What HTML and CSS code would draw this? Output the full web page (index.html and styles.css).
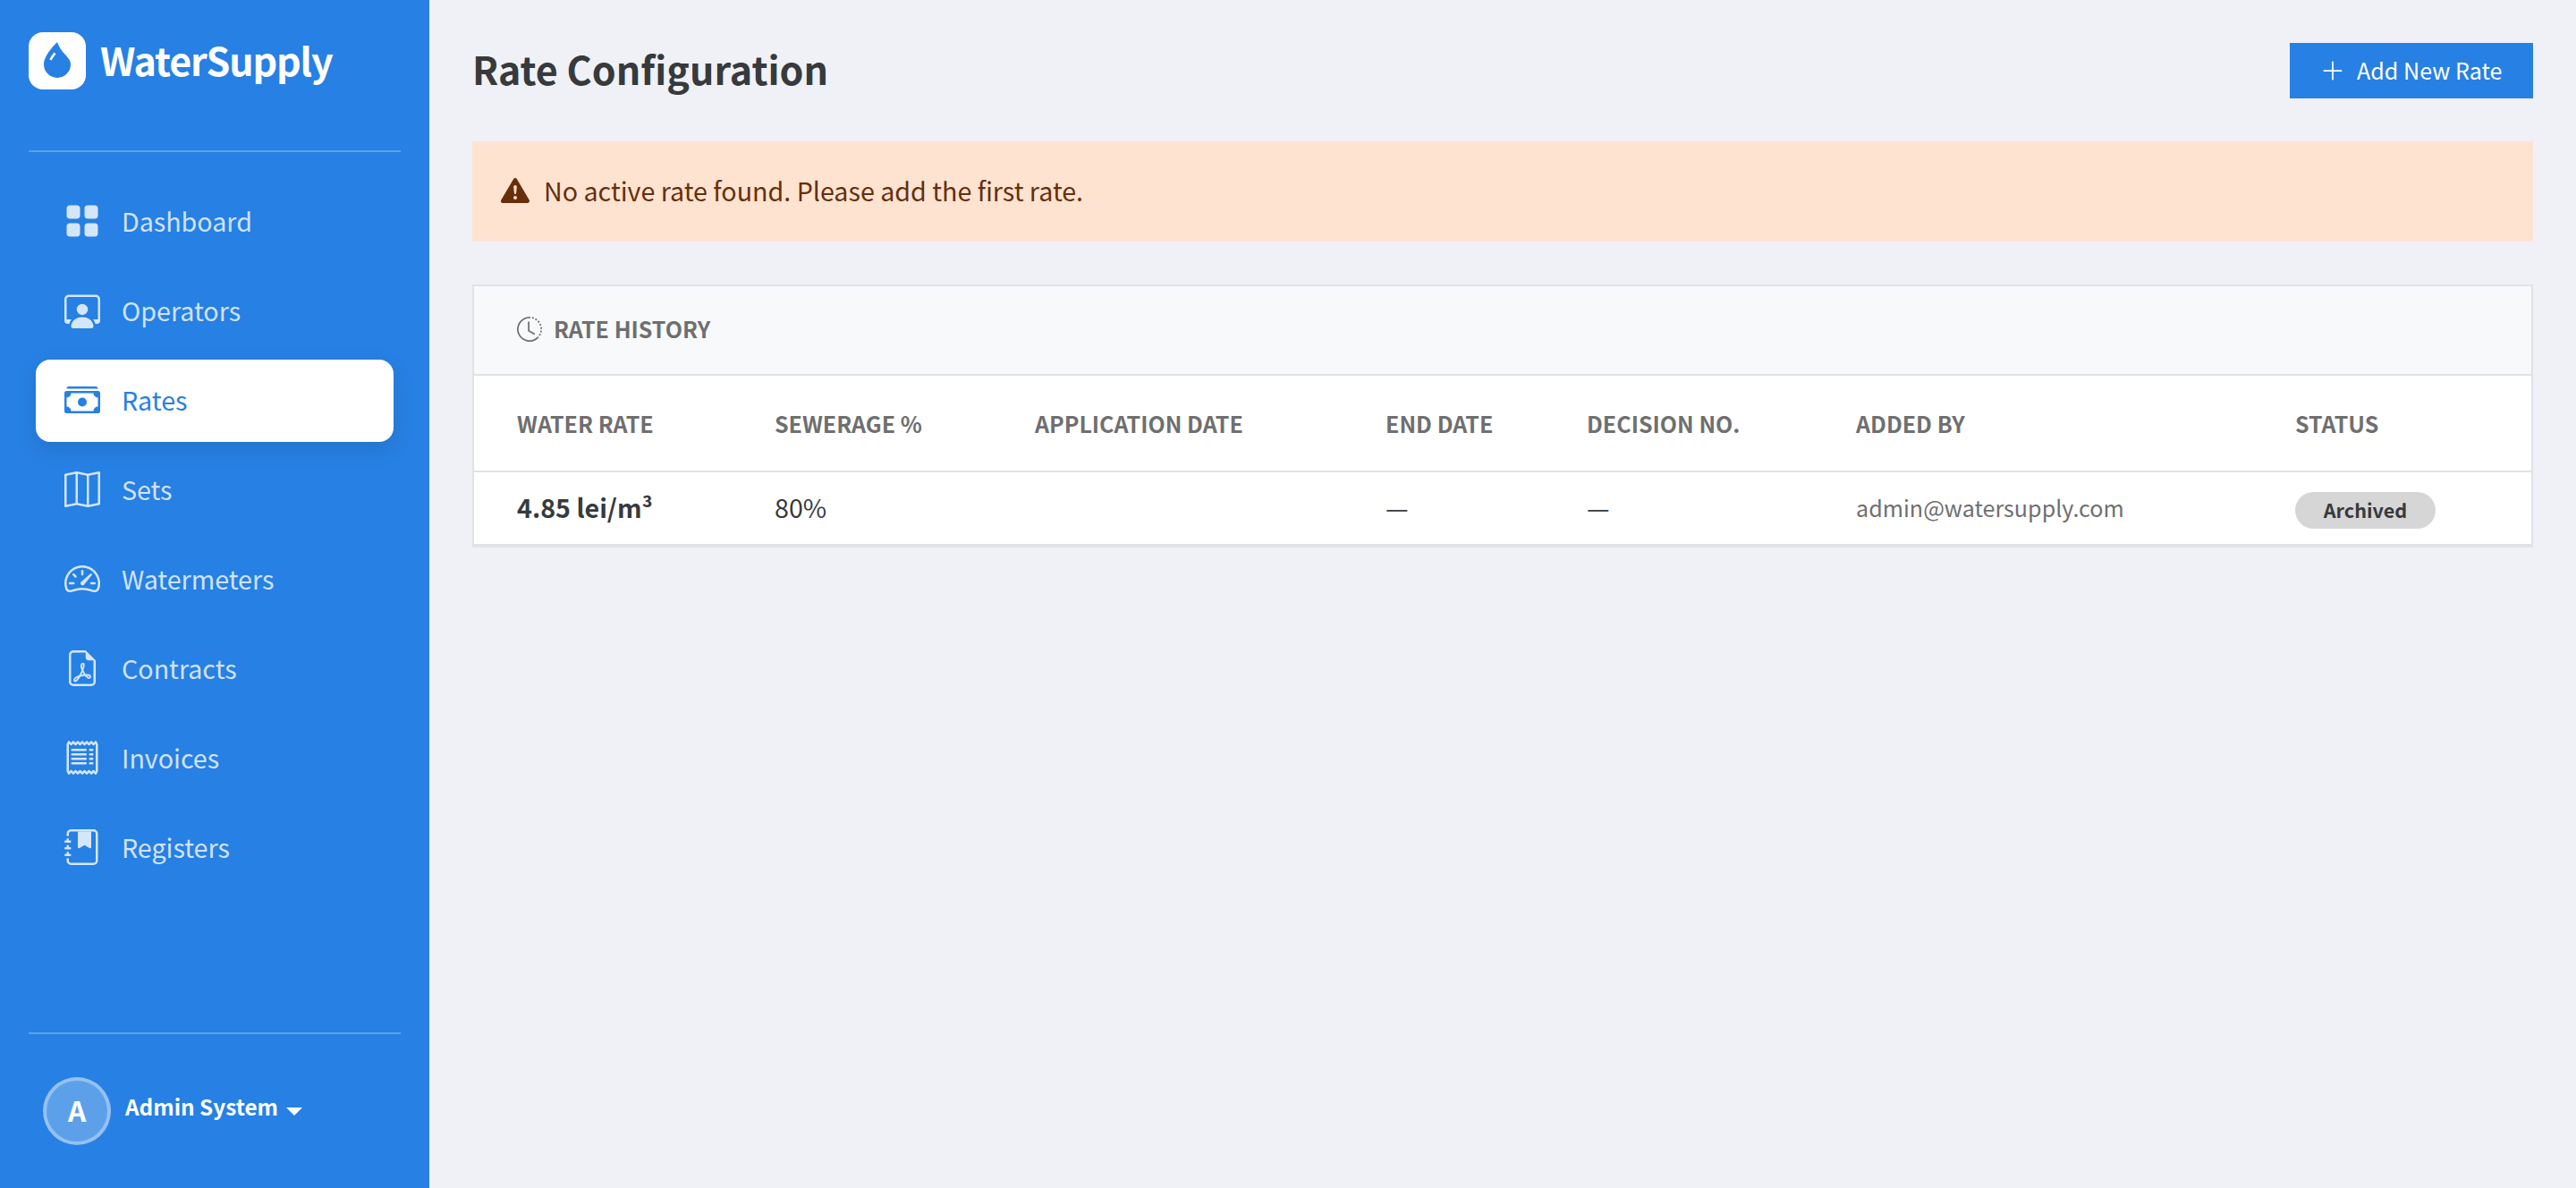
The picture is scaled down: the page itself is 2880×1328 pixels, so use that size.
FILE: index.html
```html
<!DOCTYPE html>
<html lang="en">
<head>
<meta charset="utf-8">
<title>WaterSupply – Rate Configuration</title>
<link rel="stylesheet" href="styles.css">
</head>
<body>
<div class="app">
  <aside class="sidebar">
    <a class="brand">
      <span class="brand-mark"><svg class="icon" viewBox="0 0 16 16"><path fill-rule="evenodd" d="M8 16a6 6 0 0 0 6-6c0-1.655-1.122-2.904-2.432-4.362C10.254 4.176 8.75 2.503 8 0c0 0-6 5.686-6 10a6 6 0 0 0 6 6ZM6.646 4.646l.708.708c-.29.29-1.128 1.311-1.907 2.87l-.894-.448c.82-1.641 1.717-2.753 2.093-3.13Z"/></svg></span>
      <span class="brand-name">WaterSupply</span>
    </a>
    <nav class="nav">
      <a class="nav-item"><svg class="icon" viewBox="0 0 16 16"><path d="M1 2.5A1.5 1.5 0 0 1 2.5 1h3A1.5 1.5 0 0 1 7 2.5v3A1.5 1.5 0 0 1 5.5 7h-3A1.5 1.5 0 0 1 1 5.5v-3zm8 0A1.5 1.5 0 0 1 10.5 1h3A1.5 1.5 0 0 1 15 2.5v3A1.5 1.5 0 0 1 13.5 7h-3A1.5 1.5 0 0 1 9 5.5v-3zm-8 8A1.5 1.5 0 0 1 2.5 9h3A1.5 1.5 0 0 1 7 10.5v3A1.5 1.5 0 0 1 5.5 15h-3A1.5 1.5 0 0 1 1 13.5v-3zm8 0A1.5 1.5 0 0 1 10.5 9h3a1.5 1.5 0 0 1 1.5 1.5v3a1.5 1.5 0 0 1-1.5 1.5h-3A1.5 1.5 0 0 1 9 13.5v-3z"/></svg><span>Dashboard</span></a>
      <a class="nav-item"><svg class="icon" viewBox="0 0 16 16"><path d="M4 16s-1 0-1-1 1-4 5-4 5 3 5 4-1 1-1 1H4Zm4-5.95a2.5 2.5 0 1 0 0-5 2.5 2.5 0 0 0 0 5Z"/><path d="M2 1a2 2 0 0 0-2 2v9.5A1.5 1.5 0 0 0 1.5 14h.653a5.373 5.373 0 0 1 1.066-2H1V3a1 1 0 0 1 1-1h12a1 1 0 0 1 1 1v9h-2.219c.554.654.89 1.373 1.066 2h.653a1.5 1.5 0 0 0 1.5-1.5V3a2 2 0 0 0-2-2H2Z"/></svg><span>Operators</span></a>
      <a class="nav-item active"><svg class="icon" viewBox="0 0 16 16"><path d="M1 3a1 1 0 0 1 1-1h12a1 1 0 0 1 1 1H1zm7 8a2 2 0 1 0 0-4 2 2 0 0 0 0 4z"/><path d="M0 5a1 1 0 0 1 1-1h14a1 1 0 0 1 1 1v8a1 1 0 0 1-1 1H1a1 1 0 0 1-1-1V5zm3 0a2 2 0 0 1-2 2v4a2 2 0 0 1 2 2h10a2 2 0 0 1 2-2V7a2 2 0 0 1-2-2H3z"/></svg><span>Rates</span></a>
      <a class="nav-item"><svg class="icon" viewBox="0 0 16 16"><path fill-rule="evenodd" d="M15.817.113A.5.5 0 0 1 16 .5v14a.5.5 0 0 1-.402.49l-5 1a.502.502 0 0 1-.196 0L5.5 15.01l-4.902.98A.5.5 0 0 1 0 15.5v-14a.5.5 0 0 1 .402-.49l5-1a.5.5 0 0 1 .196 0L10.5.99l4.902-.98a.5.5 0 0 1 .415.103zM10 1.91l-4-.8v12.98l4 .8V1.91zm1 12.98 4-.8V1.11l-4 .8v12.98zm-6-.8V1.11l-4 .8v12.98l4-.8z"/></svg><span>Sets</span></a>
      <a class="nav-item"><svg class="icon" viewBox="0 0 16 16"><path d="M8 4a.5.5 0 0 1 .5.5V6a.5.5 0 0 1-1 0V4.5A.5.5 0 0 1 8 4zM3.732 5.732a.5.5 0 0 1 .707 0l.915.914a.5.5 0 1 1-.708.708l-.914-.915a.5.5 0 0 1 0-.707zM2 10a.5.5 0 0 1 .5-.5h1.586a.5.5 0 0 1 0 1H2.5A.5.5 0 0 1 2 10zm9.5 0a.5.5 0 0 1 .5-.5h1.5a.5.5 0 0 1 0 1H12a.5.5 0 0 1-.5-.5zm.754-4.246a.389.389 0 0 0-.527-.02L7.547 9.31a.91.91 0 1 0 1.302 1.258l3.434-4.297a.389.389 0 0 0-.029-.518z"/><path fill-rule="evenodd" d="M0 10a8 8 0 1 1 15.547 2.661c-.442 1.253-1.845 1.602-2.932 1.25C11.309 13.488 9.475 13 8 13c-1.474 0-3.31.488-4.615.911-1.087.352-2.49.003-2.932-1.25A7.988 7.988 0 0 1 0 10zm8-7a7 7 0 0 0-6.603 9.329c.203.575.923.876 1.68.63C4.397 12.533 6.358 12 8 12s3.604.532 4.923.96c.757.245 1.477-.056 1.68-.631A7 7 0 0 0 8 3z"/></svg><span>Watermeters</span></a>
      <a class="nav-item"><svg class="icon" viewBox="0 0 16 16"><path d="M14 14V4.5L9.5 0H4a2 2 0 0 0-2 2v12a2 2 0 0 0 2 2h8a2 2 0 0 0 2-2zM9.5 3A1.5 1.5 0 0 0 11 4.5h2V14a1 1 0 0 1-1 1H4a1 1 0 0 1-1-1V2a1 1 0 0 1 1-1h5.5v2z"/><path d="M4.603 14.087a.81.81 0 0 1-.438-.42c-.195-.388-.13-.776.08-1.102.198-.307.526-.568.897-.787a7.68 7.68 0 0 1 1.482-.645 19.697 19.697 0 0 0 1.062-2.227 7.269 7.269 0 0 1-.43-1.295c-.086-.4-.119-.796-.046-1.136.075-.354.274-.672.65-.823.192-.077.4-.12.602-.077a.7.7 0 0 1 .477.365c.088.164.12.356.127.538.007.188-.012.396-.047.614-.084.51-.27 1.134-.52 1.794a10.954 10.954 0 0 0 .98 1.686 5.753 5.753 0 0 1 1.334.05c.364.066.734.195.96.465.12.144.193.32.2.518.007.192-.047.382-.138.563a1.04 1.04 0 0 1-.354.416.856.856 0 0 1-.51.138c-.331-.014-.654-.196-.933-.417a5.712 5.712 0 0 1-.911-.95 11.651 11.651 0 0 0-1.997.406 11.307 11.307 0 0 1-1.02 1.51c-.292.35-.609.656-.927.787a.793.793 0 0 1-.58.029zm1.379-1.901c-.166.076-.32.156-.459.238-.328.194-.541.383-.647.547-.094.145-.096.25-.04.361.01.022.02.036.026.044a.266.266 0 0 0 .035-.012c.137-.056.355-.235.635-.572a8.18 8.18 0 0 0 .45-.606zm1.64-1.33a12.71 12.71 0 0 1 1.01-.193 11.744 11.744 0 0 1-.51-.858 20.801 20.801 0 0 1-.5 1.05zm2.446.45c.15.163.296.3.435.41.24.19.407.253.498.256a.107.107 0 0 0 .07-.015.307.307 0 0 0 .094-.125.436.436 0 0 0 .059-.2.095.095 0 0 0-.026-.063c-.052-.062-.2-.152-.518-.209a3.876 3.876 0 0 0-.612-.053zM8.078 7.8a6.7 6.7 0 0 0 .2-.828c.031-.188.043-.343.038-.465a.613.613 0 0 0-.032-.198.517.517 0 0 0-.145.04c-.087.035-.158.106-.196.283-.04.192-.03.469.046.822.024.111.054.227.09.346z"/></svg><span>Contracts</span></a>
      <a class="nav-item"><svg class="icon" viewBox="0 0 16 16"><path d="M1.92.506a.5.5 0 0 1 .434.14L3 1.293l.646-.647a.5.5 0 0 1 .708 0L5 1.293l.646-.647a.5.5 0 0 1 .708 0L7 1.293l.646-.647a.5.5 0 0 1 .708 0L9 1.293l.646-.647a.5.5 0 0 1 .708 0l.646.647.646-.647a.5.5 0 0 1 .708 0l.646.647.646-.647a.5.5 0 0 1 .801.13l.5 1A.5.5 0 0 1 15 2v12a.5.5 0 0 1-.053.224l-.5 1a.5.5 0 0 1-.8.13L13 14.707l-.646.647a.5.5 0 0 1-.708 0L11 14.707l-.646.647a.5.5 0 0 1-.708 0L9 14.707l-.646.647a.5.5 0 0 1-.708 0L7 14.707l-.646.647a.5.5 0 0 1-.708 0L5 14.707l-.646.647a.5.5 0 0 1-.708 0L3 14.707l-.646.647a.5.5 0 0 1-.801-.13l-.5-1A.5.5 0 0 1 1 14V2a.5.5 0 0 1 .053-.224l.5-1a.5.5 0 0 1 .367-.27zm.217 1.338L2 2.118v11.764l.137.274.51-.51a.5.5 0 0 1 .707 0l.646.647.646-.646a.5.5 0 0 1 .708 0l.646.646.646-.646a.5.5 0 0 1 .708 0l.646.646.646-.646a.5.5 0 0 1 .708 0l.646.646.646-.646a.5.5 0 0 1 .708 0l.646.646.646-.646a.5.5 0 0 1 .708 0l.509.509.137-.274V2.118l-.137-.274-.51.51a.5.5 0 0 1-.707 0L12 1.707l-.646.647a.5.5 0 0 1-.708 0L10 1.707l-.646.647a.5.5 0 0 1-.708 0L8 1.707l-.646.647a.5.5 0 0 1-.708 0L6 1.707l-.646.647a.5.5 0 0 1-.708 0L4 1.707l-.646.647a.5.5 0 0 1-.708 0l-.509-.51z"/><path d="M3 4.5a.5.5 0 0 1 .5-.5h6a.5.5 0 1 1 0 1h-6a.5.5 0 0 1-.5-.5zm0 2a.5.5 0 0 1 .5-.5h6a.5.5 0 1 1 0 1h-6a.5.5 0 0 1-.5-.5zm0 2a.5.5 0 0 1 .5-.5h6a.5.5 0 1 1 0 1h-6a.5.5 0 0 1-.5-.5zm0 2a.5.5 0 0 1 .5-.5h6a.5.5 0 0 1 0 1h-6a.5.5 0 0 1-.5-.5zm8-6a.5.5 0 0 1 .5-.5h1a.5.5 0 0 1 0 1h-1a.5.5 0 0 1-.5-.5zm0 2a.5.5 0 0 1 .5-.5h1a.5.5 0 0 1 0 1h-1a.5.5 0 0 1-.5-.5zm0 2a.5.5 0 0 1 .5-.5h1a.5.5 0 0 1 0 1h-1a.5.5 0 0 1-.5-.5zm0 2a.5.5 0 0 1 .5-.5h1a.5.5 0 0 1 0 1h-1a.5.5 0 0 1-.5-.5z"/></svg><span>Invoices</span></a>
      <a class="nav-item"><svg class="icon" viewBox="0 0 16 16"><path fill-rule="evenodd" d="M6 1h6v7a.5.5 0 0 1-.757.429L9 7.083 6.757 8.43A.5.5 0 0 1 6 8V1z"/><path d="M3 0h10a2 2 0 0 1 2 2v12a2 2 0 0 1-2 2H3a2 2 0 0 1-2-2v-1h1v1a1 1 0 0 0 1 1h10a1 1 0 0 0 1-1V2a1 1 0 0 0-1-1H3a1 1 0 0 0-1 1v1H1V2a2 2 0 0 1 2-2z"/><path d="M1 5v-.5a.5.5 0 0 1 1 0V5h.5a.5.5 0 0 1 0 1h-2a.5.5 0 0 1 0-1H1zm0 3v-.5a.5.5 0 0 1 1 0V8h.5a.5.5 0 0 1 0 1h-2a.5.5 0 0 1 0-1H1zm0 3v-.5a.5.5 0 0 1 1 0v.5h.5a.5.5 0 0 1 0 1h-2a.5.5 0 0 1 0-1H1z"/></svg><span>Registers</span></a>
    </nav>
    <div class="account">
      <span class="avatar">A</span>
      <span class="account-name">Admin System</span>
      <span class="caret"></span>
    </div>
  </aside>
  <main class="content">
    <header class="page-head">
      <h1>Rate Configuration</h1>
      <button class="btn" type="button"><svg class="icon" viewBox="0 0 16 16"><path fill-rule="evenodd" d="M8 2a.5.5 0 0 1 .5.5v5h5a.5.5 0 0 1 0 1h-5v5a.5.5 0 0 1-1 0v-5h-5a.5.5 0 0 1 0-1h5v-5A.5.5 0 0 1 8 2Z"/></svg><span>Add New Rate</span></button>
    </header>
    <div class="alert"><svg class="icon" viewBox="0 0 16 16"><path d="M8.982 1.566a1.13 1.13 0 0 0-1.96 0L.165 13.233c-.457.778.091 1.767.98 1.767h13.713c.889 0 1.438-.99.98-1.767L8.982 1.566zM8 5c.535 0 .954.462.9.995l-.35 3.507a.552.552 0 0 1-1.1 0L7.1 5.995A.905.905 0 0 1 8 5zm.002 6a1 1 0 1 1 0 2 1 1 0 0 1 0-2z"/></svg><span>No active rate found. Please add the first rate.</span></div>
    <section class="card">
      <div class="card-head"><svg class="icon" viewBox="0 0 16 16"><path d="M8.515 1.019A7 7 0 0 0 8 1V0a8 8 0 0 1 .589.022l-.074.997zm2.004.45a7.003 7.003 0 0 0-.985-.299l.219-.976c.383.086.76.2 1.126.342l-.36.933zm1.37.71a7.01 7.01 0 0 0-.439-.27l.493-.87a8.025 8.025 0 0 1 .979.654l-.615.789a6.996 6.996 0 0 0-.418-.302zm1.834 1.79a6.99 6.99 0 0 0-.653-.796l.724-.69c.27.285.52.59.747.91l-.818.576zm.744 1.352a7.08 7.08 0 0 0-.214-.468l.893-.45a7.976 7.976 0 0 1 .45 1.088l-.95.313a7.023 7.023 0 0 0-.179-.483zm.53 2.507a6.991 6.991 0 0 0-.1-1.025l.985-.17c.067.386.106.778.116 1.17l-1 .025zm-.131 1.538c.033-.17.06-.339.081-.51l.993.123a7.957 7.957 0 0 1-.23 1.155l-.964-.267c.046-.165.086-.332.12-.501zm-.952 2.379c.184-.29.346-.594.486-.908l.914.405c-.16.36-.345.706-.555 1.038l-.845-.535zm-.964 1.205c.122-.122.239-.248.35-.378l.758.653a8.073 8.073 0 0 1-.401.432l-.707-.707z"/><path d="M8 1a7 7 0 1 0 4.95 11.95l.707.707A8.001 8.001 0 1 1 8 0v1z"/><path d="M7.5 3a.5.5 0 0 1 .5.5v5.21l3.248 1.856a.5.5 0 0 1-.496.868l-3.5-2A.5.5 0 0 1 7 9V3.5a.5.5 0 0 1 .5-.5z"/></svg><span>RATE HISTORY</span></div>
      <table class="table">
        <colgroup><col class="c-rate"><col class="c-sewerage"><col class="c-applied"><col class="c-end"><col class="c-decision"><col class="c-author"><col></colgroup>
        <thead>
          <tr><th>WATER RATE</th><th>SEWERAGE %</th><th>APPLICATION DATE</th><th>END DATE</th><th>DECISION NO.</th><th>ADDED BY</th><th>STATUS</th></tr>
        </thead>
        <tbody>
          <tr><td class="rate">4.85 lei/m³</td><td>80%</td><td></td><td>—</td><td>—</td><td class="author">admin@watersupply.com</td><td><span class="badge">Archived</span></td></tr>
        </tbody>
      </table>
    </section>
  </main>
</div>
</body>
</html>
```
FILE: styles.css
```css
* { box-sizing: border-box; }
body {
  margin: 0;
  background: #f0f1f6;
  color: #373a3c;
  font-family: "Noto Sans CJK SC", "Noto Sans", sans-serif;
  font-size: 28.65px;
  line-height: 48px;
}
.icon { display: block; flex: none; fill: currentColor; }
.app { display: flex; height: 1328px; }

.sidebar {
  display: flex;
  flex-direction: column;
  width: 480px;
  padding: 0 32px;
  background: #2780e3;
  color: #fff;
}
.brand {
  display: flex;
  gap: 16px;
  height: 170px;
  padding-top: 36px;
  border-bottom: 2px solid rgba(255, 255, 255, .25);
}
.brand-mark {
  display: grid;
  place-items: center;
  width: 64px;
  height: 64px;
  border-radius: 16px;
  background: #fff;
  color: #2780e3;
}
.brand-mark .icon { width: 40px; height: 40px; margin-bottom: 2px; }
.brand-name { font-size: 43px; font-weight: 700; line-height: 60px; letter-spacing: -1.15px; }
.nav {
  display: flex;
  flex: 1;
  flex-direction: column;
  gap: 8px;
  padding: 32px 8px 0;
}
.nav-item {
  display: flex;
  align-items: center;
  gap: 24px;
  height: 92px;
  padding: 0 32px;
  border-radius: 16px;
  color: rgba(255, 255, 255, .8);
}
.nav-item .icon { width: 40px; height: 40px; margin-bottom: 2px; }
.nav-item span { padding-bottom: 3px; }
.nav-item.active {
  background: #fff;
  color: #2780e3;
  box-shadow: 0 8px 24px rgba(0, 0, 0, .1);
}
.account {
  display: flex;
  align-items: center;
  height: 174px;
  padding: 0 16px;
  border-top: 2px solid rgba(255, 255, 255, .25);
}
.avatar {
  display: grid;
  place-items: center;
  width: 76px;
  height: 76px;
  margin-right: 16px;
  padding-bottom: 4px;
  border: 4px solid rgba(255, 255, 255, .35);
  border-radius: 50%;
  background: rgba(255, 255, 255, .25);
  font-size: 31.5px;
  font-weight: 700;
}
.account-name { margin-bottom: 11px; font-size: 24.3px; font-weight: 700; }
.caret {
  margin-left: 9px;
  border: 9px solid transparent;
  border-top-color: #fff;
  border-bottom: 0;
}

.content { flex: 1; padding: 48px; }
.page-head {
  display: flex;
  justify-content: space-between;
  align-items: center;
  height: 62px;
  margin-bottom: 48px;
}
h1 { margin: 0; padding-bottom: 6px; font-size: 43px; font-weight: 700; line-height: 56px; }
.btn {
  display: flex;
  align-items: center;
  gap: 13px;
  width: 272px;
  height: 62px;
  padding: 0 0 0 34px;
  border: 0;
  background: #2780e3;
  color: #fff;
  font: 25.1px/40px "Noto Sans CJK SC", "Noto Sans", sans-serif;
}
.btn .icon { width: 28px; height: 28px; }
.btn span { padding-bottom: 2px; white-space: nowrap; }
.alert {
  display: flex;
  align-items: center;
  gap: 16px;
  height: 112px;
  margin-bottom: 48px;
  padding: 0 32px;
  background: #ffe3d1;
  color: #662f0a;
}
.alert .icon { width: 32px; height: 32px; margin-bottom: 2px; }
.alert span { padding-bottom: 3px; }
.card {
  border: 2px solid #dfe2e6;
  border-bottom-width: 4px;
  background: #fff;
}
.card-head {
  display: flex;
  align-items: center;
  gap: 13px;
  height: 100px;
  padding: 0 48px;
  border-bottom: 2px solid #dfe2e6;
  background: #f8f9fb;
  color: #6f6f6f;
  font-size: 25px;
  font-weight: 700;
}
.card-head .icon { width: 28px; height: 28px; margin-bottom: 2px; }
.card-head span { padding-bottom: 4px; }
.table { width: 100%; border-collapse: collapse; table-layout: fixed; }
.c-rate { width: 288px; }
.c-sewerage { width: 291px; }
.c-applied { width: 392px; }
.c-end { width: 225px; }
.c-decision { width: 301px; }
.c-author { width: 491px; }
th, td { padding: 0 0 3px 48px; text-align: left; white-space: nowrap; }
thead tr { height: 108px; box-shadow: inset 0 -2px #dfe2e6; }
th { color: #6f6f6f; font-size: 25px; font-weight: 700; }
tbody tr { height: 80px; }
.rate { font-weight: 700; }
.author { color: #6f6f6f; font-size: 25.1px; }
.badge {
  display: block;
  width: 157px;
  height: 41px;
  margin-top: 8px;
  border-radius: 21px;
  background: #d6d6d6;
  color: #373a3c;
  font-size: 21.6px;
  font-weight: 700;
  line-height: 39px;
  text-align: center;
}
```
